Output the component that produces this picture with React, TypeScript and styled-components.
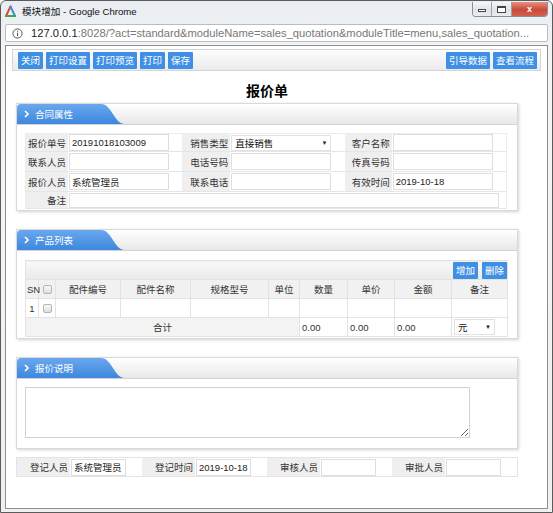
import React from "react";
import styled, { createGlobalStyle } from "styled-components";

const GlobalStyle = createGlobalStyle`
  html, body {
    margin: 0;
    padding: 0;
    background: #fff;
  }
  body {
    font-family: "Liberation Sans", "Noto Sans CJK SC", sans-serif;
  }
  * {
    box-sizing: border-box;
  }
`;

const cjk = `"Liberation Sans", "Noto Sans CJK SC", sans-serif`;

const fields = [
  [
    { label: "报价单号", value: "20191018103009", width: 42 },
    { label: "销售类型", value: "直接销售", width: 48, select: true },
    { label: "客户名称", value: "", width: 47 },
  ],
  [
    { label: "联系人员", value: "", width: 42 },
    { label: "电话号码", value: "", width: 48 },
    { label: "传真号码", value: "", width: 47 },
  ],
  [
    { label: "报价人员", value: "系统管理员", width: 42 },
    { label: "联系电话", value: "", width: 48 },
    { label: "有效时间", value: "2019-10-18", width: 47 },
  ],
];

const columns = [
  { title: "SN", width: 13, align: "left" },
  { title: "", width: 17, check: true },
  { title: "配件编号", width: 65 },
  { title: "配件名称", width: 70 },
  { title: "规格型号", width: 78 },
  { title: "单位", width: 31 },
  { title: "数量", width: 48 },
  { title: "单价", width: 47 },
  { title: "金额", width: 57 },
  { title: "备注", width: 56 },
];

const footer = [
  { label: "登记人员", value: "系统管理员" },
  { label: "登记时间", value: "2019-10-18" },
  { label: "审核人员", value: "" },
  { label: "审批人员", value: "" },
];

const ChromeLogo = () => (
  <svg width="13" height="13" viewBox="0 0 13 13">
    <path d="M6.5 1.5 L2 11" stroke="#e0463a" strokeWidth="2" strokeLinecap="round" />
    <path d="M6.5 1.5 L11 11" stroke="#3b8fdc" strokeWidth="2" strokeLinecap="round" />
    <path d="M2 11 L11 11" stroke="#43a548" strokeWidth="2" strokeLinecap="round" />
  </svg>
);

const InfoIcon = () => (
  <svg width="11" height="11" viewBox="0 0 11 11">
    <circle cx="5.5" cy="5.5" r="4.6" fill="none" stroke="#555" strokeWidth="1" />
    <rect x="5" y="4.6" width="1.1" height="3.6" fill="#555" />
    <rect x="5" y="2.6" width="1.1" height="1.1" fill="#555" />
  </svg>
);

const Chevron = () => (
  <svg width="5" height="8" viewBox="0 0 5 8">
    <path d="M1 1 L4 4 L1 7" fill="none" stroke="#fff" strokeWidth="1.6" />
  </svg>
);

const Panel = ({ title, children }: { title: string; children: React.ReactNode }) => (
  <PanelBox>
    <PanelHeader>
      <PanelTab>
        <Chevron />
        <span>{title}</span>
      </PanelTab>
    </PanelHeader>
    <PanelBody>{children}</PanelBody>
  </PanelBox>
);

const App = () => {
  return (
    <>
      <GlobalStyle />
      <Window>
        <TitleBar>
          <ChromeLogo />
          <TitleText>模块增加 - Google Chrome</TitleText>
          <WinControls>
            <WinButton $kind="min">
              <MinGlyph />
            </WinButton>
            <WinButton $kind="max">
              <MaxGlyph />
            </WinButton>
            <WinButton $kind="close">x</WinButton>
          </WinControls>
        </TitleBar>

        <AddressBar>
          <InfoIcon />
          <UrlText>
            <b>127.0.0.1</b>
            :8028/?act=standard&amp;moduleName=sales_quotation&amp;moduleTitle=menu,sales_quotation...
          </UrlText>
        </AddressBar>

        <Viewport>
          <ToolBar>
            <ButtonGroup>
              <BlueButton>关闭</BlueButton>
              <BlueButton>打印设置</BlueButton>
              <BlueButton>打印预览</BlueButton>
              <BlueButton>打印</BlueButton>
              <BlueButton>保存</BlueButton>
            </ButtonGroup>
            <ButtonGroup>
              <BlueButton>引导数据</BlueButton>
              <BlueButton>查看流程</BlueButton>
            </ButtonGroup>
          </ToolBar>

          <FormArea>
            <FormTitle>报价单</FormTitle>

            <Panel title="合同属性">
              <FieldGrid>
                {fields.map((row, i) => (
                  <FieldRow key={i}>
                    {row.map((f) => (
                      <React.Fragment key={f.label}>
                        <FieldLabel $width={f.width}>{f.label}</FieldLabel>
                        <FieldValue>
                          {f.select ? (
                            <SelectBox $width={100}>
                              <span>{f.value}</span>
                              <Arrow>▼</Arrow>
                            </SelectBox>
                          ) : (
                            <TextInput $width={100} readOnly value={f.value} />
                          )}
                        </FieldValue>
                      </React.Fragment>
                    ))}
                  </FieldRow>
                ))}
                <FieldRow $height={17}>
                  <FieldLabel $width={42}>备注</FieldLabel>
                  <FieldValue>
                    <TextInput $width={430} $height={15} readOnly value="" />
                  </FieldValue>
                </FieldRow>
              </FieldGrid>
            </Panel>

            <Panel title="产品列表">
              <ProductTable>
                <colgroup>
                  {columns.map((c, i) => (
                    <col key={i} style={{ width: c.width }} />
                  ))}
                </colgroup>
                <tbody>
                  <tr>
                    <ToolCell colSpan={10}>
                      <BlueButton>增加</BlueButton>
                      <BlueButton>删除</BlueButton>
                    </ToolCell>
                  </tr>
                  <tr>
                    {columns.map((c, i) => (
                      <HeadCell key={i} $align={c.align}>
                        {c.check ? <CheckBox /> : c.title}
                      </HeadCell>
                    ))}
                  </tr>
                  <tr>
                    <Cell $align="center">1</Cell>
                    <Cell $align="center">
                      <CheckBox />
                    </Cell>
                    {columns.slice(2).map((_, i) => (
                      <Cell key={i} />
                    ))}
                  </tr>
                  <tr>
                    <SumCell colSpan={6}>合计</SumCell>
                    <Cell>0.00</Cell>
                    <Cell>0.00</Cell>
                    <Cell>0.00</Cell>
                    <Cell>
                      <SelectBox $width={41}>
                        <span>元</span>
                        <Arrow>▼</Arrow>
                      </SelectBox>
                    </Cell>
                  </tr>
                </tbody>
              </ProductTable>
            </Panel>

            <Panel title="报价说明">
              <NoteArea />
            </Panel>

            <FooterRow>
              {footer.map((f) => (
                <FooterGroup key={f.label}>
                  <FieldLabel $width={53}>{f.label}</FieldLabel>
                  <TextInput $width={55} readOnly value={f.value} />
                </FooterGroup>
              ))}
            </FooterRow>
          </FormArea>
        </Viewport>
      </Window>
    </>
  );
};

export default App;

const Window = styled.div`
  width: 553px;
  height: 513px;
  display: flex;
  flex-direction: column;
  border: 1px solid #5b5b5b;
  border-radius: 6px 6px 0 0;
  background: linear-gradient(#e9edf1, #f3f5f7 60px, #eef0f2);
  overflow: hidden;
`;

const TitleBar = styled.div`
  height: 21px;
  display: flex;
  align-items: center;
  padding: 0 4px 1px 3px;
`;

const TitleText = styled.span`
  margin-left: 5px;
  font-family: ${cjk};
  font-size: 9.6px;
  color: #111;
`;

const WinControls = styled.div`
  margin-left: auto;
  align-self: flex-start;
  margin-top: 1px;
  display: flex;
  border: 1px solid #8a8f96;
  border-radius: 0 0 4px 4px;
  border-top: none;
  overflow: hidden;
`;

const WinButton = styled.div<{ $kind: "min" | "max" | "close" }>`
  height: 14px;
  width: ${(p) => (p.$kind === "close" ? 36 : p.$kind === "max" ? 20 : 18)}px;
  display: flex;
  align-items: center;
  justify-content: center;
  color: #fff;
  font: bold 9px "Liberation Sans", sans-serif;
  background: ${(p) =>
    p.$kind === "close"
      ? "linear-gradient(#e7917f, #c9493a 55%, #d2604e)"
      : "linear-gradient(#f4f6f8, #dfe3e8 55%, #e9ecef)"};
  border-left: ${(p) => (p.$kind === "min" ? "none" : "1px solid #9aa0a7")};
`;

const MinGlyph = styled.span`
  width: 8px;
  height: 3px;
  margin-top: 3px;
  border: 1px solid #444;
  background: #fff;
`;

const MaxGlyph = styled.span`
  width: 9px;
  height: 7px;
  border: 1px solid #444;
  border-top-width: 2px;
  background: #fff;
`;

const AddressBar = styled.div`
  height: 18px;
  margin: 2px 4px 0 4px;
  display: flex;
  align-items: center;
  gap: 8px;
  padding-left: 6px;
  background: #fff;
  border: 1px solid #b9bdc2;
  border-radius: 2px;
`;

const UrlText = styled.span`
  font-family: "Liberation Sans", sans-serif;
  font-size: 11.2px;
  color: #777;
  white-space: nowrap;
  overflow: hidden;
  b {
    font-weight: normal;
    color: #222;
  }
`;

const Viewport = styled.div`
  flex: 1;
  margin: 3px 4px 3px 4px;
  padding: 3px 6px 0 6px;
  background: #fff;
  border: 1px solid #8f8f8f;
`;

const ToolBar = styled.div`
  height: 22px;
  display: flex;
  align-items: center;
  justify-content: space-between;
  padding: 0 3px 0 5px;
  border: 1px solid #d5d5d5;
  background: linear-gradient(#fdfdfd, #ebebeb);
`;

const ButtonGroup = styled.div`
  display: flex;
  gap: 3px;
`;

const BlueButton = styled.button`
  height: 17px;
  padding: 0 3px;
  border: none;
  border-radius: 1px;
  background: #3f8fe4;
  color: #fff;
  font-family: ${cjk};
  font-size: 9.5px;
  line-height: 17px;
  cursor: pointer;
`;

const FormArea = styled.div`
  width: 502px;
  margin-left: 4px;
`;

const FormTitle = styled.h1`
  margin: 10px 0 2px;
  height: 20px;
  line-height: 20px;
  text-align: center;
  font-family: ${cjk};
  font-size: 14px;
  font-weight: bold;
  color: #000;
`;

const PanelBox = styled.section`
  margin-bottom: 18px;
  border: 1px solid #d9d9d9;
  background: #fff;
  box-shadow: 1px 1px 3px rgba(0, 0, 0, 0.18);
`;

const PanelHeader = styled.div`
  height: 21px;
  border-bottom: 1px solid #d3d3d3;
  background: linear-gradient(#ffffff, #e8e8e8);
`;

const PanelTab = styled.div`
  width: 108px;
  height: 20px;
  display: flex;
  align-items: center;
  gap: 6px;
  padding-left: 7px;
  background: linear-gradient(#6aa8ee, #3d87dd);
  clip-path: path("M0 20 V4 Q0 0 4 0 H84 C95 0 97 20 108 20 Z");
  color: #fff;
  font-family: ${cjk};
  font-size: 9.5px;
`;

const PanelBody = styled.div`
  padding: 8px 9px 1px 8px;
`;

const FieldGrid = styled.div`
  display: flex;
  flex-direction: column;
  width: 482px;
`;

const FieldRow = styled.div<{ $height?: number }>`
  height: ${(p) => p.$height || 20}px;
  display: flex;
  border-bottom: 1px solid #e6e6e6;
  border-left: 1px solid #ececec;
  border-right: 1px solid #ececec;
  &:first-child {
    border-top: 1px solid #ececec;
    height: 19px;
  }
`;

const FieldLabel = styled.div<{ $width: number }>`
  flex: 0 0 ${(p) => p.$width}px;
  display: flex;
  align-items: center;
  justify-content: flex-end;
  padding-right: 2px;
  background: #efefef;
  color: #333;
  font-family: ${cjk};
  font-size: 9.5px;
`;

const FieldValue = styled.div`
  flex: 1;
  display: flex;
  align-items: center;
  padding-left: 1px;
`;

const TextInput = styled.input<{ $width: number; $height?: number }>`
  width: ${(p) => p.$width}px;
  height: ${(p) => p.$height || 17}px;
  margin: 0;
  padding: 0 2px;
  border: 1px solid #dedede;
  outline: none;
  background: #fff;
  color: #222;
  font-family: ${cjk};
  font-size: 9.5px;
`;

const SelectBox = styled.div<{ $width: number }>`
  width: ${(p) => p.$width}px;
  height: 16px;
  display: flex;
  align-items: center;
  justify-content: space-between;
  padding: 0 3px 0 3px;
  border: 1px solid #e2e2e2;
  background: #fff;
  color: #111;
  font-family: ${cjk};
  font-size: 9.5px;
`;

const Arrow = styled.span`
  font-size: 6px;
  color: #222;
`;

const ProductTable = styled.table`
  width: 482px;
  margin: 1px 0 0;
  table-layout: fixed;
  border-collapse: collapse;
  font-family: ${cjk};
  font-size: 9.5px;
  color: #333;
  td {
    height: 19px;
    padding: 0 2px;
    border: 1px solid #e3e3e3;
  }
`;

const ToolCell = styled.td`
  text-align: right;
  background: linear-gradient(#f9f9f9, #e9e9e9);
  button {
    margin-left: 4px;
    vertical-align: middle;
  }
  && {
    padding: 1px 0 0 0;
  }
`;

const HeadCell = styled.td<{ $align?: string }>`
  text-align: ${(p) => p.$align || "center"};
  background: #f1f1f1;
  && {
    padding: 0 1px;
  }
`;

const Cell = styled.td<{ $align?: string }>`
  text-align: ${(p) => p.$align || "left"};
  background: #fff;
`;

const SumCell = styled.td`
  text-align: center;
  background: #f3f3f3;
`;

const CheckBox = styled.span`
  display: inline-block;
  width: 9px;
  height: 9px;
  vertical-align: middle;
  border: 1px solid #b5b5b5;
  border-radius: 2px;
  background: linear-gradient(#fafafa, #dcdcdc);
`;

const NoteArea = styled.textarea`
  display: block;
  width: 445px;
  height: 51px;
  margin: 0 0 9px 0;
  border: 1px solid #d2d2d2;
  outline: none;
  resize: both;
`;

const FooterRow = styled.div`
  height: 20px;
  display: flex;
  margin-top: -10px;
  border: 1px solid #e4e4e4;
  background: #fff;
`;

const FooterGroup = styled.div`
  flex: 1;
  display: flex;
  align-items: center;
  gap: 1px;
  & > div {
    align-self: stretch;
  }
`;
